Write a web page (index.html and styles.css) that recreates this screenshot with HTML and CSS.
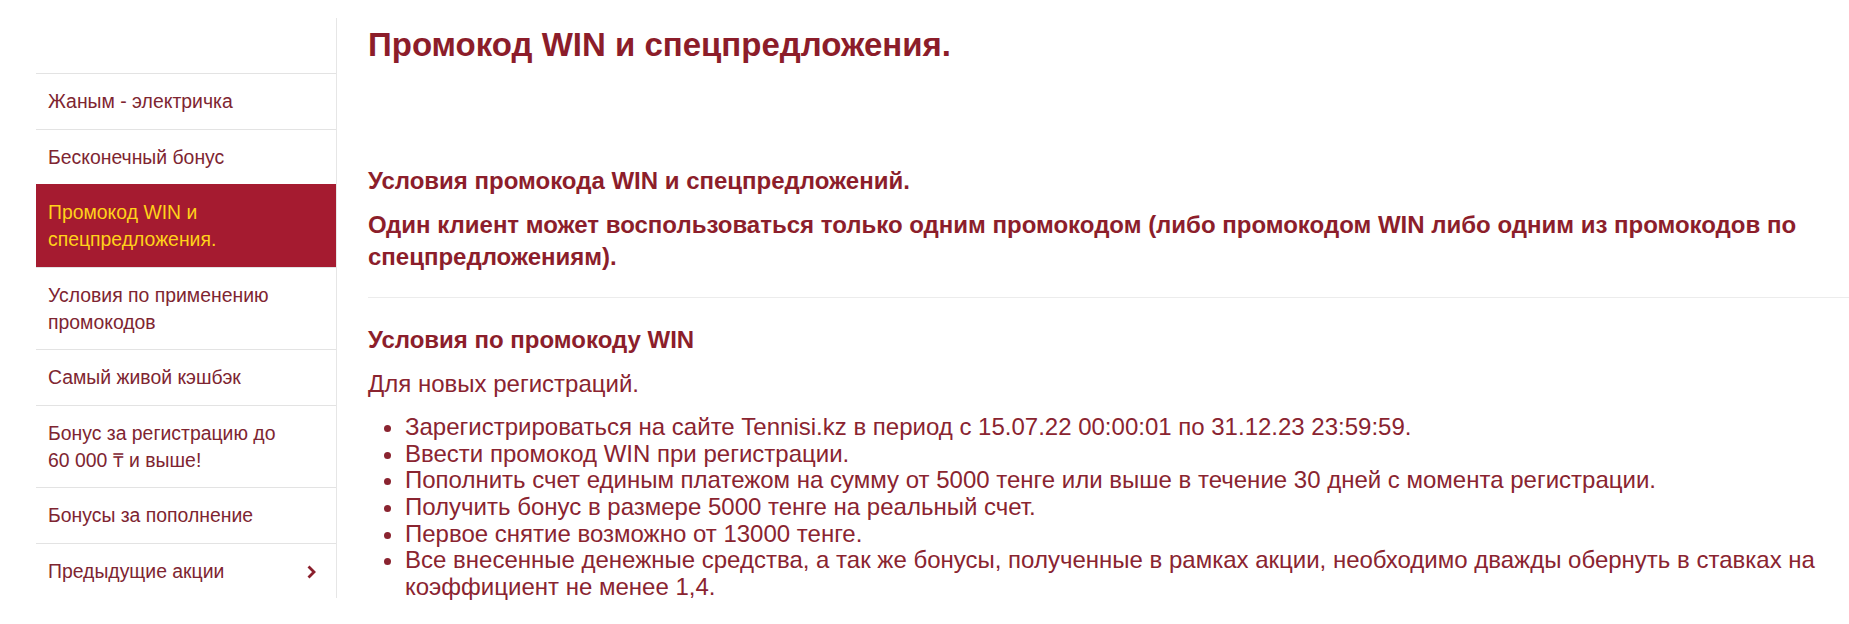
FILE: index.html
```html
<!DOCTYPE html>
<html lang="ru">
<head>
<meta charset="utf-8">
<title>Промокод WIN и спецпредложения.</title>
<link rel="stylesheet" href="styles.css">
</head>
<body>
<div class="page">
  <aside class="sidebar">
    <nav class="menu">
      <a class="menu-item" href="#">Жаным - электричка</a>
      <a class="menu-item" href="#">Бесконечный бонус</a>
      <a class="menu-item active" href="#">Промокод WIN и<br>спецпредложения.</a>
      <a class="menu-item" href="#">Условия по применению<br>промокодов</a>
      <a class="menu-item" href="#">Самый живой кэшбэк</a>
      <a class="menu-item" href="#">Бонус за регистрацию до<br>60 000 ₸ и выше!</a>
      <a class="menu-item" href="#">Бонусы за пополнение</a>
      <a class="menu-item has-sub" href="#">Предыдущие акции
        <svg class="chev" width="9" height="14" viewBox="0 0 9 14"><path d="M1.5 1.5 L7 7 L1.5 12.5" fill="none" stroke="currentColor" stroke-width="2.8"/></svg>
      </a>
    </nav>
  </aside>
  <main class="content">
    <h1 class="title">Промокод WIN и спецпредложения.</h1>
    <h3 class="sub">Условия промокода WIN и спецпредложений.</h3>
    <p class="strong">Один клиент может воспользоваться только одним промокодом (либо промокодом WIN либо одним из промокодов по спецпредложениям).</p>
    <hr class="sep">
    <h3 class="sub2">Условия по промокоду WIN</h3>
    <p class="text">Для новых регистраций.</p>
    <ul class="list">
      <li>Зарегистрироваться на сайте Tennisi.kz в период с 15.07.22 00:00:01 по 31.12.23 23:59:59.</li>
      <li>Ввести промокод WIN при регистрации.</li>
      <li>Пополнить счет единым платежом на сумму от 5000 тенге или выше в течение 30 дней с момента регистрации.</li>
      <li>Получить бонус в размере 5000 тенге на реальный счет.</li>
      <li>Первое снятие возможно от 13000 тенге.</li>
      <li>Все внесенные денежные средства, а так же бонусы, полученные в рамках акции, необходимо дважды обернуть в ставках на коэффициент не менее 1,4.</li>
    </ul>
  </main>
</div>
</body>
</html>
```

FILE: styles.css
```css
html, body {
  margin: 0;
  padding: 0;
  background: #ffffff;
  font-family: "Liberation Sans", Arial, sans-serif;
  overflow: hidden;
}

.page {
  display: flex;
  align-items: flex-start;
  padding-top: 18px;
  padding-left: 36px;
}

.sidebar {
  width: 300px;
  flex: none;
  border-right: 1px solid #e6e6e6;
  padding-top: 55px;
  min-height: 524px;
}

.menu {
  display: flex;
  flex-direction: column;
}

.menu-item {
  display: flex;
  align-items: center;
  justify-content: space-between;
  border-top: 1px solid #e3e3e3;
  padding: 14px 12px 13.5px 12px;
  font-size: 19.4px;
  line-height: 27px;
  color: #7e2531;
  text-decoration: none;
}

.menu-item.active {
  background: #a51b30;
  color: #ffd21a;
  border-top-color: #a51b30;
}

.menu-item.has-sub {
  padding-right: 20px;
}

.chev {
  color: #8a1f2c;
  margin-top: 2px;
}

.content {
  flex: 1;
  min-width: 0;
  padding-left: 31px;
  color: #8c1e2b;
}

.title {
  margin: 9px 0 0 0;
  font-size: 33px;
  line-height: 36px;
  font-weight: bold;
  color: #8c1d2a;
}

.sub {
  margin: 104px 0 0 0;
  font-size: 24px;
  line-height: 28px;
  font-weight: bold;
}

.strong {
  margin: 14px 0 0 0;
  font-size: 24px;
  line-height: 32px;
  font-weight: bold;
}

.sep {
  border: 0;
  border-top: 1px solid #ececec;
  margin: 24px 0 0 0;
  height: 0;
}

.sub2 {
  margin: 28px 0 0 0;
  font-size: 24px;
  line-height: 28px;
  font-weight: bold;
}

.text {
  margin: 16px 0 0 0;
  font-size: 24px;
  line-height: 28px;
  color: #8a2430;
}

.list {
  margin: 16px 0 0 0;
  padding-left: 37px;
  font-size: 24px;
  line-height: 26.67px;
  color: #8a2430;
}
```
